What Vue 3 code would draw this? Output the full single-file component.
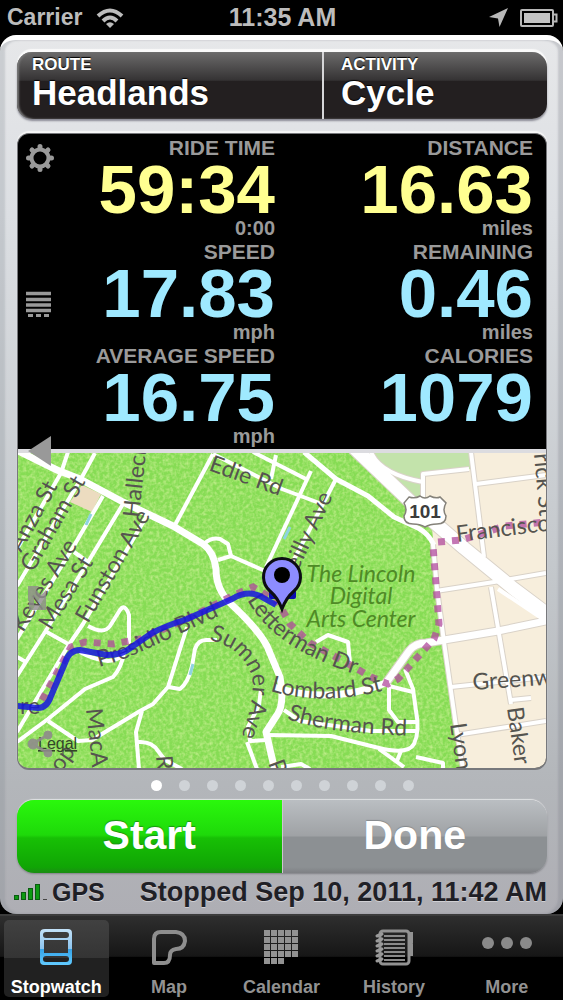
<script setup>
import { ref } from 'vue';

const stats = [
  { label: 'RIDE TIME', value: '59:34', unit: '0:00', main: true },
  { label: 'DISTANCE', value: '16.63', unit: 'miles', main: true },
  { label: 'SPEED', value: '17.83', unit: 'mph' },
  { label: 'REMAINING', value: '0.46', unit: 'miles' },
  { label: 'AVERAGE SPEED', value: '16.75', unit: 'mph' },
  { label: 'CALORIES', value: '1079', unit: '' }
];

const tabs = ['Stopwatch', 'Map', 'Calendar', 'History', 'More'];
const currentTab = ref('Stopwatch');

const pageCount = 10;
const currentPage = ref(1);

// small streets, drawn 4 units wide
const streets = [
  'M68 453 L61 474 L17 550',
  'M95 454 L82 478 L17 587',
  'M103 497 L75 545 L17 640',
  'M123 505 L88 563 L45 633 L17 677',
  'M88 563 L74 553',
  'M148 515 L83 625 L68 647 L17 733',
  'M45 632 L70 646',
  'M17 658 L26 663',
  'M88 627 Q104 636 110 627 L120 611 Q125 604 129 616 L129 645',
  'M80 653 Q92 660 108 662 Q120 662 124 653 Q122 668 113 678 L85 690 L48 720 L17 743',
  'M48 722 L78 742 L92 741 L140 712 L153 705 L168 688 L187 628',
  'M168 688 L180 690 Q188 684 192 667 L195 650 Q198 641 206 641 L217 641',
  'M142 712 L136 733 L139 770',
  'M138 743 Q152 742 158 752 L165 761 L182 770',
  'M261 690 L259 706 L248 728 L250 742 L267 741',
  'M247 743 L257 770',
  'M267 736 L331 737 L379 749 Q408 756 414 745 Q420 732 416 712 L413 690 L405 670',
  'M379 750 L404 768',
  'M401 752 L397 762',
  'M416 758 L443 764 V770',
  'M389 685 V711 L398 723 H416',
  'M389 687 L413 693',
  'M284 711 L300 722 L371 732 H418',
  'M316 643 L328 636 L348 643 L350 664',
  'M281 768 L301 765 L310 770',
  'M213 455 L175 526',
  'M213 455 L282 490 L322 505',
  'M253 453 L306 480',
  'M276 456 L271 480',
  'M205 544 Q212 538 220 540 L228 545 L231 557 L218 561',
  'M231 557 L265 572',
  'M311 472 L266 568',
  'M336 480 L288 572'
];

const cityStreets = [
  'M371 453 Q380 475 423 483',
  'M423 500 V475 L469 470',
  'M471 453 L484 558',
  'M476 485 L546 476',
  'M436 592 L494 583 L546 574',
  'M491 588 L511 705',
  'M511 701 L531 699',
  'M451 688 L546 678',
  'M456 736 L546 722',
  'M433 545 L437 590 L444 643 L456 727 L463 770'
];

const routePath = 'M17 707 L38 709 Q47 709 51 697 L65 664 Q69 651 80 651 L107 656 Q118 656 126 652 L152 634 Q165 627 187 620 L232 600 Q247 591 260 597 L276 606';

const plannedPaths = [
  'M42 701 L71 648 L85 643 L113 645 L140 640 L187 620 L232 597 L253 588 L278 603 L290 625 L310 644 L345 663 L371 678 L388 685 L398 680 L434 640 L439 625 L433 547',
  'M438 543 L462 541 L505 527 L546 523'
];

const labels = [
  { text: 'Anza St', x: 21, y: 554, angle: -61 },
  { text: 'Graham St', x: 33, y: 574, angle: -60 },
  { text: 'Keyes Ave', x: 23, y: 634, angle: -58 },
  { text: 'Mesa St', x: 51, y: 632, angle: -58 },
  { text: 'Funston Ave', x: 88, y: 625, angle: -60 },
  { text: 'Halleck', x: 139, y: 519, angle: -84 },
  { text: 'Edie Rd', x: 208, y: 471, angle: 20 },
  { text: 'Reilly Ave', x: 292, y: 585, angle: -65 },
  { text: 'Francisco St', x: 457, y: 543, angle: -7 },
  { text: 'rick St', x: 534, y: 455, angle: 85 },
  { text: 'Greenwich St', x: 473, y: 691, angle: -4 },
  { text: 'Baker', x: 507, y: 709, angle: 82 },
  { text: 'Lyon', x: 450, y: 725, angle: 82 },
  { text: 'MacA', x: 86, y: 710, angle: 84 },
  { text: 'op', x: 61, y: 774, angle: -55 },
  { text: 'R', x: 156, y: 757, angle: 85 },
  { text: 'P', x: 268, y: 764, angle: 70 },
  { text: 're', x: 20, y: 715, angle: 0 }
];

const curvedLabels = [
  { id: 'presidio', text: 'Presidio Blvd', path: 'M99 668 Q122 662 145 651 L232 611' },
  { id: 'letterman', text: 'Letterman Dr', path: 'M247 601 Q263 629 294 648 Q322 665 372 681' },
  { id: 'lombard', text: 'Lombard St', path: 'M270 692 Q330 710 402 686' },
  { id: 'sherman', text: 'Sherman Rd', path: 'M287 720 Q330 736 425 737' },
  { id: 'sumner', text: 'Sumner Ave', path: 'M209 641 Q240 648 251 675 Q258 695 236 752' }
];
</script>

<template>
  <div class="app">
    <header class="status">
      <div class="status-left">
        <span class="carrier">Carrier</span>
        <svg class="wifi" viewBox="0 0 28 20" width="28" height="20">
          <g fill="none" stroke="#bcbcbc" stroke-width="4">
            <path d="M2 8 Q14 -3 26 8" />
            <path d="M7 13 Q14 6 21 13" />
          </g>
          <path d="M10 16 Q14 12.500 18 16 L14 20 Z" fill="#bcbcbc" />
        </svg>
      </div>
      <span class="time">11:35 AM</span>
      <div class="status-right">
        <svg viewBox="0 0 20 20" width="20" height="20">
          <path d="M20 0 L11.500 19 L10 10.500 L1 9 Z" fill="#b8b8b8" />
        </svg>
        <svg viewBox="0 0 38 18" width="38" height="18">
          <rect x="1" y="1" width="32" height="16" rx="1" fill="none" stroke="#b8b8b8" stroke-width="2" />
          <rect x="4" y="4" width="26" height="10" fill="#c4c4c4" />
          <path d="M33 5.500 H36.500 V12.500 H33" fill="none" stroke="#b8b8b8" stroke-width="2" />
        </svg>
      </div>
    </header>

    <main class="card">
      <div class="selectors">
        <button class="selector route">
          <span class="selector-label">ROUTE</span>
          <span class="selector-value">Headlands</span>
        </button>
        <button class="selector activity">
          <span class="selector-label">ACTIVITY</span>
          <span class="selector-value">Cycle</span>
        </button>
      </div>

      <section class="panel">
        <div class="stats">
          <div v-for="stat in stats" :key="stat.label" class="stat">
            <div class="stat-label">{{ stat.label }}</div>
            <div class="stat-value" :class="{ main: stat.main }">{{ stat.value }}</div>
            <div class="stat-unit">{{ stat.unit }}</div>
          </div>
        </div>

        <svg class="map" viewBox="18 454 528 315">
          <defs>
            <filter id="grain" x="0" y="0" width="100%" height="100%">
              <feTurbulence type="fractalNoise" baseFrequency="0.3" numOctaves="2" seed="4" />
              <feColorMatrix type="matrix" values="0 0 0 0 0.75  0 0 0 0 0.93  0 0 0 0 0.4  1.2 0 0 0 -0.44" />
            </filter>
            <clipPath id="park">
              <path d="M17 453 H354 L432 530 L444 643 L456 727 L463 770 H17 Z" />
            </clipPath>
          </defs>

          <rect x="17" y="453" width="530" height="318" fill="#f7eedc" />
          <path d="M354 453 H470 V470 L424 476 V512 Z" fill="#c3e3ab" />
          <g clip-path="url(#park)">
            <rect x="17" y="453" width="450" height="318" fill="#86dc54" />
            <rect x="17" y="453" width="450" height="318" filter="url(#grain)" />
          </g>
          <path d="M82 486 L101 495 L92 513 L70 503 Z" fill="#ecdcc0" />

          <g class="road">
            <g stroke="#d9d2c8" stroke-width="6">
              <path v-for="d in cityStreets" :key="d" :d="d" />
              <path d="M386 684 L409 652 Q415 644 426 644 L498 632 L546 622" stroke-width="9" />
              <path d="M350 445 L414 506 L464 549 L514 590 L550 617" stroke-width="15" />
            </g>
            <g stroke="#fff" stroke-width="4">
              <path v-for="d in streets" :key="d" :d="d" />
              <path v-for="d in cityStreets" :key="d" :d="d" />
            </g>
            <path class="major" d="M304 453 L336 480 L368 497 L394 518 L418 529 Q428 534 434 546" stroke-width="5" />
            <path class="major" d="M14 450 L57 471 L80 480 L123 503 L173 527 L203 545 Q214 553 216 570 Q216 590 230 604 Q258 630 267 647 L280 678 Q285 705 277 716 L266 733 L275 772" stroke-width="7" />
            <path class="major" d="M274 688 Q330 706 386 684 L409 652 Q415 644 426 644 L498 632 L546 622" stroke-width="7" />
            <path class="major" d="M350 445 L414 506 L464 549 L514 590 L550 617" stroke-width="13" />
            <path class="major" d="M498 590 L546 622" stroke-width="4" />
          </g>
          <path d="M91 515 L86 526 M193 665 L190 676 M284 540 L290 528" stroke="#8fd3e0" stroke-width="3" />

          <g class="planned">
            <path v-for="d in plannedPaths" :key="d" :d="d" />
          </g>

          <g class="street-name">
            <text
              v-for="label in labels"
              :key="label.text"
              :transform="`translate(${label.x} ${label.y}) rotate(${label.angle})`"
            >{{ label.text }}</text>
            <template v-for="label in curvedLabels" :key="label.id">
              <path :id="label.id" :d="label.path" fill="none" stroke="none" />
              <text><textPath :href="`#${label.id}`">{{ label.text }}</textPath></text>
            </template>
          </g>

          <g class="place-name">
            <text x="361" y="583">The Lincoln</text>
            <text x="361" y="605">Digital</text>
            <text x="361" y="628">Arts Center</text>
          </g>

          <path
            d="M409 498 Q415 500 420 497 Q425 501 430 497 Q436 500 440 498 L446 504 Q442 511 446 517 Q446 525 437 525 Q430 525 425 528 Q420 525 413 525 Q404 525 404 517 Q408 511 404 504 Z"
            fill="#fff" stroke="#85827a" stroke-width="1.500"
          />
          <text class="shield" x="425" y="519">101</text>

          <path class="track" :d="routePath" />
          <rect x="269" y="591" width="27" height="9" rx="2" fill="#0b0bb0" />
          <path
            d="M282 610 Q278 599 270 592 A18.500 18.500 0 1 1 294 592 Q286 599 282 610 Z"
            fill="#8d8cff" stroke="#0c0c14" stroke-width="3"
          />
          <circle cx="282" cy="576" r="8" fill="#000" />

          <text class="legal" x="38" y="750">Legal</text>
        </svg>

        <nav class="tools">
          <button class="tool" aria-label="Settings">
            <svg viewBox="0 0 28 28" width="28" height="28">
              <g stroke="#999" stroke-width="5" stroke-linecap="round">
                <path d="M14 2.500 V6 M14 22 V25.500 M2.500 14 H6 M22 14 H25.500 M6 6 L8 8 M20 20 L22 22 M22 6 L20 8 M6 22 L8 20" />
              </g>
              <circle cx="14" cy="14" r="8.500" fill="#000" stroke="#999" stroke-width="4" />
            </svg>
          </button>
          <button class="tool" aria-label="List">
            <svg viewBox="0 0 28 28" width="28" height="28">
              <path d="M0 3.500 H25 M0 9.500 H25 M0 15 H25 M0 20.500 H25" stroke="#999" stroke-width="3.500" />
              <path d="M2 25.500 H7 M10 25.500 H15 M18 25.500 H23" stroke="#999" stroke-width="3" />
            </svg>
          </button>
          <button class="tool" aria-label="Back">
            <svg viewBox="0 0 28 30" width="28" height="30">
              <path d="M25 0 V30 L2 15 Z" fill="#999" />
            </svg>
          </button>
          <button class="tool" aria-label="Zoom">
            <svg viewBox="0 0 28 28" width="28" height="28">
              <path
                d="M2 2 H13 L10 6 L15 11 L20 6 V26 H3 V17 H2 Z M8 13 V21 H15 L11 17 Z"
                fill="#8f8b8c" fill-rule="evenodd" opacity="0.8"
              />
            </svg>
          </button>
          <button class="tool" aria-label="Share">
            <svg viewBox="0 0 28 28" width="28" height="28">
              <g fill="#8f8b8c" stroke="#8f8b8c" opacity="0.9">
                <path d="M22 5 L6 14 L22 23" fill="none" stroke-width="3" />
                <circle cx="7" cy="14" r="5" />
                <circle cx="22" cy="5" r="4" />
                <circle cx="22" cy="23" r="4" />
              </g>
            </svg>
          </button>
        </nav>
      </section>

      <div class="dots">
        <button
          v-for="page in pageCount"
          :key="page"
          class="dot"
          :class="{ active: currentPage === page }"
          :aria-label="`Page ${page}`"
          @click="currentPage = page"
        ></button>
      </div>

      <div class="actions">
        <button class="action start">Start</button>
        <button class="action done">Done</button>
      </div>

      <footer class="info">
        <div class="gps">
          <svg viewBox="0 0 34 18" width="34" height="18">
            <g fill="#0d9a12" stroke="#0a5c10" stroke-width="1">
              <rect x="0.500" y="12.500" width="4" height="4" />
              <rect x="7.500" y="9.500" width="4" height="7" />
              <rect x="14.500" y="5.500" width="4" height="11" />
              <rect x="21.500" y="1.500" width="4" height="15" />
            </g>
            <rect x="29" y="16" width="4" height="1" fill="#444" />
          </svg>
          <span>GPS</span>
        </div>
        <div class="stopped">Stopped Sep 10, 2011, 11:42 AM</div>
      </footer>
    </main>

    <nav class="tabbar">
      <a
        v-for="tab in tabs"
        :key="tab"
        class="tab"
        :class="{ active: currentTab === tab }"
        href="#"
        @click.prevent="currentTab = tab"
      >
        <svg v-if="tab === 'Stopwatch'" viewBox="0 0 36 40" width="36" height="40">
          <defs>
            <linearGradient id="blue" x1="0" y1="0" x2="0" y2="1">
              <stop offset="0" stop-color="#c3e2f8" />
              <stop offset="0.55" stop-color="#8cc4ee" />
              <stop offset="0.56" stop-color="#35a3e8" />
              <stop offset="1" stop-color="#62cbff" />
            </linearGradient>
          </defs>
          <path
            fill="url(#blue)" fill-rule="evenodd"
            d="M7 2 H30 Q34 2 34 6 V34 Q34 38 30 38 H6 Q2 38 2 34 V6 Q2 2 7 2 Z M8 5 Q5 5 5 8 Q5 11 8 11 H28 Q31 11 31 8 Q31 5 28 5 Z M6 13 V26 H30 V13 Z M8 29 Q5 29 5 32 Q5 35 8 35 H28 Q31 35 31 32 Q31 29 28 29 Z"
          />
        </svg>
        <svg v-else-if="tab === 'Map'" viewBox="0 0 36 40" width="36" height="40">
          <path
            d="M3 36 V12 Q3 5 10 5 H25 Q34 6 34 14 Q33 22 25 22 Q19 23 19 28 Q19 36 13 36 Z"
            fill="none" stroke="#8e8e8e" stroke-width="4" stroke-linejoin="round"
          />
        </svg>
        <svg v-else-if="tab === 'Calendar'" viewBox="0 0 36 40" width="36" height="40">
          <path
            d="M1 6 H36 M1 13 H36 M1 20 H36 M1 27 H36 M1 34 H22"
            fill="none" stroke="#929292" stroke-width="6" stroke-dasharray="6 1"
          />
        </svg>
        <svg v-else-if="tab === 'History'" viewBox="0 0 40 40" width="40" height="40">
          <rect x="6" y="4" width="29" height="33" rx="3" fill="none" stroke="#929292" stroke-width="3" />
          <path d="M10 9 H31 M10 13 H31 M10 17 H31 M10 21 H31 M10 25 H31 M10 29 H31 M10 33 H31" stroke="#8a8a8a" stroke-width="2" />
          <path d="M3 9 L8 7 M3 14 L8 12 M3 19 L8 17 M3 24 L8 22 M3 29 L8 27 M3 34 L8 32" stroke="#9a9a9a" stroke-width="3" stroke-linecap="round" />
          <path d="M36 6 H38 V16 L36 18 H38 V28 H36" fill="#929292" stroke="#929292" stroke-width="2" />
        </svg>
        <svg v-else viewBox="0 0 54 40" width="54" height="40">
          <g fill="#8a8a8a">
            <circle cx="8" cy="16" r="6" />
            <circle cx="27" cy="16" r="6" />
            <circle cx="46" cy="16" r="6" />
          </g>
        </svg>
        <span>{{ tab }}</span>
      </a>
    </nav>
  </div>
</template>

<style>
body {
  margin: 0;
  background: #000;
}
</style>

<style scoped>
.app {
  font-family: "Liberation Sans", Arial, sans-serif;
  font-weight: bold;
  background: #000;
}

button {
  font: inherit;
  border: 0;
  padding: 0;
  cursor: pointer;
}

.status {
  display: grid;
  grid-template-columns: 1fr auto 1fr;
  align-items: center;
  height: 35px;
  padding: 0 5px 0 7px;
  color: #bcbcbc;
  font-size: 25px;
}

.status-left,
.status-right {
  display: flex;
  align-items: center;
  gap: 14px;
}

.status-right {
  justify-content: flex-end;
  gap: 12px;
}

.carrier {
  font-size: 23px;
}

.card {
  padding: 12px 16px 3px 17px;
  border-top: 5px solid #fff;
  border-radius: 16px;
  background: linear-gradient(#e6e7e9, #dcdfe3 20%, #c4c8cc 60%, #b3b6ba 85%, #aeaeb4);
  box-shadow: inset 5px 0 2px rgba(125, 130, 140, 0.25), inset -5px 0 2px rgba(125, 130, 140, 0.3);
}

.selectors {
  display: grid;
  grid-template-columns: 307fr 223fr;
  height: 67px;
  border-radius: 15px;
  overflow: hidden;
  background: linear-gradient(#6c6b6b, #353334 42%, #231f20 44%, #231f20);
  box-shadow: 0 -3px 1px #fafafa, 0 2px 2px #8b8b95, inset 2px 0 2px #777;
}

.selector {
  display: flex;
  flex-direction: column;
  align-items: flex-start;
  color: #fff;
  background: none;
  text-shadow: 0 -1px 1px #000;
  text-align: left;
}

.route {
  padding-left: 15px;
  border-right: 2px solid #d6d6d8;
}

.activity {
  padding-left: 17px;
}

.selector-label {
  padding-top: 3px;
  font-size: 17px;
  line-height: 20px;
}

.selector-value {
  font-size: 35px;
  line-height: 36px;
}

.panel {
  position: relative;
  margin-top: 14px;
  border: 1px solid #77787c;
  border-bottom-width: 2px;
  border-radius: 12px;
  overflow: hidden;
  background: #000;
  box-shadow: 0 -2px 1px #f6f6f6;
}

.stats {
  display: grid;
  grid-template-columns: 257px 1fr;
  padding: 2px 13px 1px 0;
  text-align: right;
  border-bottom: 4px solid #dcdce0;
}

.stat-label {
  height: 23px;
  line-height: 23px;
  font-size: 21px;
  color: #9a9a9a;
}

.stat-value {
  height: 61px;
  line-height: 61px;
  font-size: 69px;
  color: #9fe9ff;
}

.stat-value.main {
  color: #ffff91;
}

.stat-unit {
  height: 20px;
  line-height: 16px;
  font-size: 20px;
  color: #9a9a9a;
}

.map {
  display: block;
  width: 100%;
}

.road {
  fill: none;
  stroke-linejoin: round;
}

.major {
  stroke: #fff;
}

.planned {
  fill: none;
  stroke: #b04a9c;
  stroke-opacity: 0.75;
  stroke-width: 7;
  stroke-dasharray: 7 7;
}

.track {
  fill: none;
  stroke: #1515e0;
  stroke-opacity: 0.85;
  stroke-width: 6;
  stroke-linejoin: round;
}

.street-name {
  font-family: Lato, sans-serif;
  font-size: 23px;
  font-weight: normal;
  fill: #55544f;
}

.place-name {
  font-family: Lato, sans-serif;
  font-size: 23px;
  font-weight: normal;
  font-style: italic;
  text-anchor: middle;
  fill: #4f8a26;
}

.shield {
  font-size: 19px;
  text-anchor: middle;
  fill: #3c3c3c;
}

.legal {
  font-size: 16px;
  font-weight: normal;
  fill: #33442a;
  text-decoration: underline;
}

.tools {
  position: absolute;
  top: 10px;
  bottom: 10px;
  left: 8px;
  display: flex;
  flex-direction: column;
  justify-content: space-between;
}

.tool {
  display: flex;
  background: none;
}

.dots {
  display: flex;
  justify-content: center;
  align-items: center;
  gap: 17px;
  height: 30px;
}

.dot {
  width: 11px;
  height: 11px;
  border-radius: 50%;
  background: #cfd3d7;
}

.dot.active {
  background: #fff;
}

.actions {
  display: flex;
  height: 73px;
  border-radius: 17px;
  overflow: hidden;
  box-shadow: 0 -1px 1px #e2e3e5, 0 1px 2px #808086;
}

.action {
  flex: 1;
  color: #fff;
  font-size: 41px;
  line-height: 70px;
  padding-bottom: 3px;
}

.start {
  background: linear-gradient(#2af80c, #1ed90a 48%, #17c005 52%, #10a505 92%, #1b8c14);
  text-shadow: 0 -1px 1px #1a9010;
}

.done {
  border-left: 1px solid #d0c4d0;
  background: linear-gradient(#babec2, #9fa2a5 49%, #8c9093 51%, #8c9093 92%, #7e8084);
  text-shadow: 0 -1px 1px #85898c;
}

.info {
  display: flex;
  justify-content: space-between;
  align-items: center;
  height: 38px;
  margin-left: -3px;
  color: #1f2026;
  text-shadow: 0 1px 0 #d0d0d4;
  font-size: 27px;
  white-space: nowrap;
}

.gps {
  display: flex;
  align-items: center;
  gap: 4px;
  font-size: 25px;
}

.tabbar {
  display: flex;
  box-sizing: border-box;
  height: 86px;
  padding-top: 4px;
  border-top: 2px solid #3c3c3c;
  background: linear-gradient(#2e2e2e, #161616 48%, #000 49%, #000);
}

.tab {
  flex: 1;
  display: flex;
  flex-direction: column;
  align-items: center;
  gap: 10px;
  height: 70px;
  margin: 0 4px;
  padding-top: 7px;
  border-radius: 5px;
  color: #929292;
  font-size: 18px;
  line-height: 20px;
  text-decoration: none;
}

.tab.active {
  color: #fff;
  background: linear-gradient(#414141, #343434 49%, #212121 50%, #212121);
}
</style>
